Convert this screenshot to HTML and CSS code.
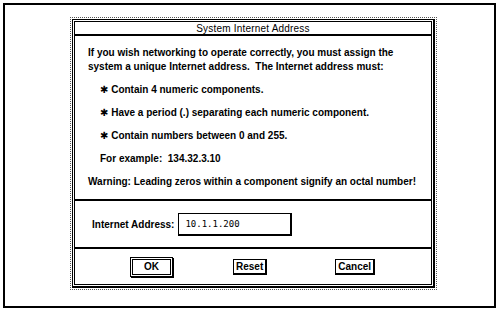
FILE: index.html
```html
<!DOCTYPE html>
<html lang="en">
<head>
  <meta charset="UTF-8" />
  <title>System Internet Address</title>
  <link rel="stylesheet" href="styles.css">
</head>
<body>
  <div class="frame">
    <div class="dialog">
      <div class="dialog-edge">
        <div class="dialog-box">
          <div class="title">System Internet Address</div>

          <div class="message">
            <p class="intro">If you wish networking to operate correctly, you must assign the<br>system a unique Internet address.&nbsp; The Internet address must:</p>
            <p class="rule"><span class="star">✱</span> Contain 4 numeric components.</p>
            <p class="rule"><span class="star">✱</span> Have a period (.) separating each numeric component.</p>
            <p class="rule"><span class="star">✱</span> Contain numbers between 0 and 255.</p>
            <p class="example">For example:&nbsp; 134.32.3.10</p>
            <p class="warning">Warning: Leading zeros within a component signify an octal number!</p>
          </div>

          <div class="field-row">
            <label for="addr">Internet Address:</label>
            <input id="addr" class="addr-input" type="text" value="10.1.1.200">
          </div>

          <div class="buttons">
            <button class="btn btn-default">OK</button>
            <button class="btn btn-reset">Reset</button>
            <button class="btn btn-cancel">Cancel</button>
          </div>
        </div>
      </div>
    </div>
  </div>
</body>
</html>
```

FILE: styles.css
```css
* {
  margin: 0;
  padding: 0;
  box-sizing: border-box;
}

body {
  background: #fff;
  font-family: 'Liberation Sans', Arial, sans-serif;
  font-size: 10px;
  font-weight: 700;
  color: #000;
}

.frame {
  margin: 3px 3px 0 3px;
  width: 493px;
  height: 305px;
  border: 2px solid #000;
  padding: 12px 0 0 65px;
}

/* stippled outer line of the dialog */
.dialog {
  width: 367px;
  height: 273px;
  border: 1px dotted #555;
  padding: 1px;
}

.dialog-edge {
  height: 100%;
  border: 1px solid #000;
  border-right-width: 2px;
  border-bottom-width: 2px;
  padding: 1px;
}

.dialog-box {
  height: 100%;
  border: 1px solid #000;
  display: flex;
  flex-direction: column;
}

.title {
  text-align: center;
  height: 14px;
  line-height: 13px;
  font-weight: 400;
  border-bottom: 2px solid #000;
  letter-spacing: 0.2px;
}

.message {
  padding: 10px 0 0 13px;
  border-bottom: 2px solid #000;
  height: 165px;
}

.message p {
  line-height: 14px;
}

.intro {
  margin-bottom: 9px;
}

.rule,
.example {
  padding-left: 12px;
  margin-bottom: 9px;
}

.star {
  font-family: 'DejaVu Sans', sans-serif;
  font-size: 10px;
  line-height: 10px;
}

.field-row {
  display: flex;
  align-items: center;
  height: 48px;
  padding-left: 17px;
  gap: 4px;
  border-bottom: 2px solid #000;
}

.addr-input {
  width: 114px;
  height: 23px;
  border: 1px solid #000;
  border-right-width: 2px;
  border-bottom-width: 2px;
  font-family: 'DejaVu Sans Mono', monospace;
  font-size: 9px;
  font-weight: 400;
  padding-left: 6px;
  color: #000;
  outline: none;
}

.buttons {
  flex: 1;
  display: flex;
  align-items: center;
  padding-left: 55px;
}

.btn {
  font-family: 'Liberation Sans', Arial, sans-serif;
  font-size: 10px;
  font-weight: 700;
  background: #fff;
  color: #000;
  border: 1px solid #000;
  border-right-width: 2px;
  border-bottom-width: 2px;
  height: 16px;
  padding: 0 2px;
}

.btn-default {
  width: 43px;
  height: 20px;
  border: 1px solid #000;
  outline: 1px solid #000;
  outline-offset: -3px;
  box-shadow: 1px 1px 0 #000;
}

.btn-reset {
  margin-left: 60px;
}

.btn-cancel {
  margin-left: 68px;
}
```
